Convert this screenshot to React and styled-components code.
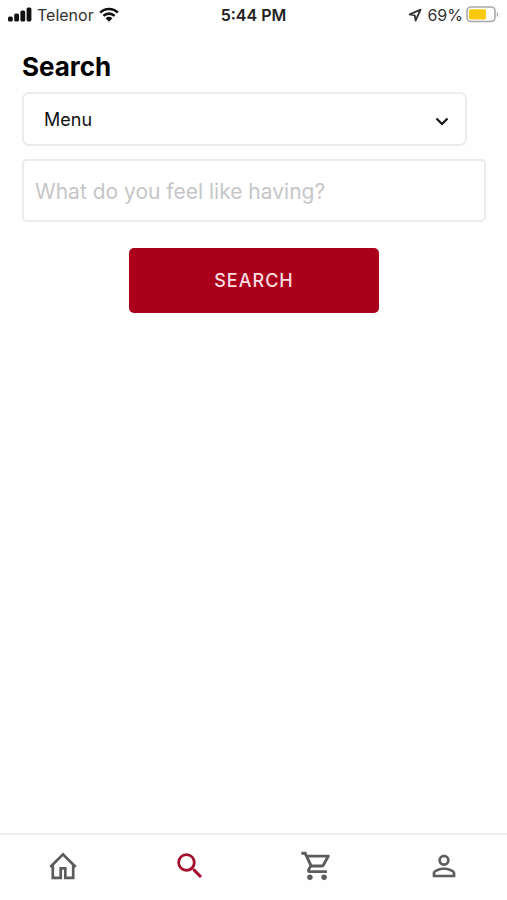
import { useState } from "react";
import styled, { createGlobalStyle } from "styled-components";
import {
  MdSearch,
  MdOutlineShoppingCart,
  MdPersonOutline,
} from "react-icons/md";

const tabs = [
  { name: "Home", icon: <HomeIcon /> },
  { name: "Search", icon: <MdSearch size={34} /> },
  { name: "Cart", icon: <MdOutlineShoppingCart size={34} /> },
  { name: "Profile", icon: <MdPersonOutline size={34} /> },
];

function HomeIcon() {
  return (
    <svg width="34" height="34" viewBox="0 0 34 34" fill="none">
      <path
        d="M4.3 18L17 5.3L29.7 18M6.8 16V28.8H14.7V19.4H19.3V28.8H27.2V16"
        stroke="currentColor"
        strokeWidth="2.7"
      />
    </svg>
  );
}

const SignalIcon = () => (
  <svg width="24" height="16" viewBox="0 0 24 16" fill="#111">
    <rect x="0" y="9.5" width="4.8" height="5" rx="1.6" />
    <rect x="6.2" y="6.5" width="4.8" height="8" rx="1.6" />
    <rect x="12.4" y="3.5" width="4.8" height="11" rx="1.6" />
    <rect x="18.6" y="0.5" width="4.8" height="14" rx="1.6" />
  </svg>
);

const WifiIcon = () => (
  <svg width="20" height="16" viewBox="0 0 20 16" fill="none">
    <path
      d="M1.2 5.6C6.2 0.7 13.8 0.7 18.8 5.6M4.4 8.9C7.6 5.9 12.4 5.9 15.6 8.9"
      stroke="#111"
      strokeWidth="2.6"
    />
    <path d="M6.6 11.2C8.6 9.4 11.4 9.4 13.4 11.2L10 14.8Z" fill="#111" />
  </svg>
);

const LocationIcon = () => (
  <svg width="14" height="14" viewBox="0 0 14 14" fill="none">
    <path
      d="M12.6 1.6L1.7 6.4L6.7 7.3L7.6 12.5Z"
      stroke="#333"
      strokeWidth="1.8"
      strokeLinejoin="round"
    />
  </svg>
);

const BatteryIcon = () => (
  <svg width="33" height="18" viewBox="0 0 33 18" fill="none">
    <rect x="1" y="1" width="28" height="14.5" rx="4" stroke="#a8a8a8" strokeWidth="1.6" />
    <rect x="3" y="3.2" width="17" height="10.2" rx="1.6" fill="#fbc810" />
    <path d="M30.8 6C32.6 6.6 32.6 10.2 30.8 10.8Z" fill="#a8a8a8" />
  </svg>
);

const App = () => {
  const [type, setType] = useState("menu");
  const [query, setQuery] = useState("");
  const [active, setActive] = useState("Search");

  return (
    <Screen>
      <GlobalStyle />
      <StatusBar>
        <StatusGroup>
          <SignalIcon />
          <span>Telenor</span>
          <WifiIcon />
        </StatusGroup>
        <Time>5:44 PM</Time>
        <StatusGroup $end>
          <LocationIcon />
          <Charge>
            <span>69%</span>
            <BatteryIcon />
          </Charge>
        </StatusGroup>
      </StatusBar>
      <SearchForm onSubmit={(e) => e.preventDefault()}>
        <Title>Search</Title>
        <SelectWrapper>
          <Select
            aria-label="Search in"
            value={type}
            onChange={(e) => setType(e.target.value)}
          >
            <option value="menu">Menu</option>
          </Select>
          <Chevron width="14" height="9" viewBox="0 0 14 9" fill="none">
            <path d="M1.5 1.5L7 7L12.5 1.5" stroke="#111" strokeWidth="2.2" />
          </Chevron>
        </SelectWrapper>
        <Input
          type="text"
          aria-label="Search text"
          placeholder="What do you feel like having?"
          value={query}
          onChange={(e) => setQuery(e.target.value)}
        />
        <SubmitButton type="submit">SEARCH</SubmitButton>
      </SearchForm>
      <TabBar>
        {tabs.map((tab) => (
          <TabButton
            key={tab.name}
            type="button"
            aria-label={tab.name}
            $active={tab.name === active}
            onClick={() => setActive(tab.name)}
          >
            {tab.icon}
          </TabButton>
        ))}
      </TabBar>
    </Screen>
  );
};

export default App;

const GlobalStyle = createGlobalStyle`
  * {
    box-sizing: border-box;
  }

  body {
    margin: 0;
    background: #fefefe;
    font-family: Inter, "Liberation Sans", sans-serif;
  }

  button, input, select {
    font-family: inherit;
  }
`;

const Screen = styled.div`
  min-height: 100vh;
  display: flex;
  flex-direction: column;
`;

const StatusBar = styled.header`
  display: grid;
  grid-template-columns: 1fr auto 1fr;
  align-items: center;
  height: 30px;
  padding: 0 8px;
  font-size: 16px;
  color: #333;
`;

const StatusGroup = styled.div`
  display: flex;
  align-items: center;
  justify-content: ${(props) => (props.$end ? "flex-end" : "flex-start")};
  gap: 5px;
`;

const Charge = styled.div`
  display: flex;
  align-items: center;
  gap: 3px;
`;

const Time = styled.div`
  font-weight: 600;
  color: #222;
`;

const SearchForm = styled.form`
  flex: 1;
  display: flex;
  flex-direction: column;
  padding: 21px 21px 20px 22px;
`;

const Title = styled.h1`
  margin: 0 0 9px;
  font-size: 26px;
  line-height: 32px;
  font-weight: 700;
  color: #000;
`;

const SelectWrapper = styled.div`
  position: relative;
  margin: 0 19px 13px 0;
`;

const Select = styled.select`
  display: block;
  appearance: none;
  width: 100%;
  height: 54px;
  padding: 0 48px 0 20px;
  border: 2px solid #ebebeb;
  border-radius: 7px;
  background: #fff;
  font-size: 18px;
  color: #111;
`;

const Chevron = styled.svg`
  position: absolute;
  right: 18px;
  top: 25px;
  pointer-events: none;
`;

const Input = styled.input`
  width: 100%;
  height: 63px;
  padding: 2px 11px 0;
  border: 2px solid #ebebeb;
  border-radius: 5px;
  background: #fff;
  font-size: 21px;
  color: #111;

  &::placeholder {
    color: #c6c6c8;
  }
`;

const SubmitButton = styled.button`
  align-self: center;
  width: 54%;
  height: 65px;
  margin-top: 26px;
  border: none;
  border-radius: 5px;
  background: #ab001c;
  font-size: 18px;
  font-weight: 500;
  letter-spacing: 1px;
  color: #fbdde1;
`;

const TabBar = styled.nav`
  display: flex;
  height: 67px;
  border-top: 2px solid #f0f0f0;
`;

const TabButton = styled.button`
  flex: 1;
  display: flex;
  align-items: center;
  justify-content: center;
  padding: 0 0 4px;
  border: none;
  background: none;
  color: ${(props) => (props.$active ? "#a30f2d" : "#5c5c5c")};
`;
